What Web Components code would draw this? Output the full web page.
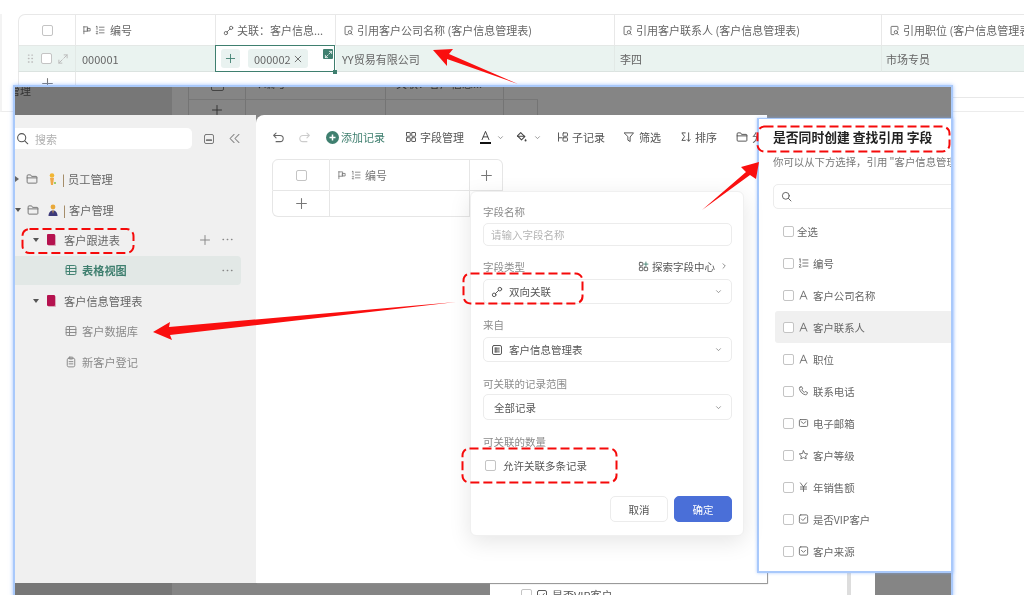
<!DOCTYPE html>
<html lang="zh">
<head>
<meta charset="utf-8">
<title>字段设置</title>
<style>
  html, body { margin: 0; padding: 0; background: #fff; }
  body { width: 1024px; height: 595px; overflow: hidden; font-family: "Noto Sans CJK SC", "Liberation Sans", sans-serif; font-size: 11px; color: #666; }
</style>
</head>
<body>
<collage-page></collage-page>

<script>
const ICONS = {
  check: '<rect x="2" y="2" width="12" height="12" rx="2"/><path d="M5 8l2.2 2.2L11 6"/>',
  drop: '<rect x="2" y="2" width="12" height="12" rx="2"/><path d="M5 7l3 3 3-3"/>',
  flag: '<path d="M3 14V2.5M3 3h6v7H3"/><rect x="9" y="5.5" width="4" height="4"/>',
  num: '<path d="M2 2.5l1.2-.8V7M1.8 10.5c.3-1 2.4-1 2.4.3 0 1-2.4 2-2.4 3.2h2.6M7 3.5h7.5M7 8h7.5M7 12.5h7.5"/>',
  link: '<circle cx="4.2" cy="11.8" r="2.4"/><circle cx="11.8" cy="4.2" r="2.4"/><path d="M5.8 10.2l4.4-4.4"/>',
  lookup: '<path d="M7 14H4a1 1 0 0 1-1-1V3a1 1 0 0 1 1-1h8a1 1 0 0 1 1 1v4"/><circle cx="10" cy="10.5" r="2.4"/><path d="M11.8 12.3l2 2"/>',
  plus: '<path d="M8 2v12M2 8h12"/>',
  dots: '<path d="M2.5 8h.6M7.7 8h.6M12.9 8h.6" stroke-width="1.6"/>',
  chev: '<path d="M4.5 6.5L8 10l3.5-3.5"/>',
  right: '<path d="M6 3.5L10.5 8 6 12.5"/>',
  search: '<circle cx="7" cy="7" r="5"/><path d="M10.8 10.8l3.7 3.7"/>',
  folder: '<path d="M1.5 3.5a1 1 0 0 1 1-1h3.7l1.2 2h6.1a1 1 0 0 1 1 1v7a1 1 0 0 1-1 1h-11a1 1 0 0 1-1-1zM1.5 6.5h13"/>',
  table: '<rect x="1.5" y="2" width="13" height="12" rx="1.5"/><path d="M1.5 6h13M1.5 10h13M6 2v12"/>',
  form: '<rect x="3" y="3" width="10" height="11.5" rx="2"/><rect x="5.5" y="1.5" width="5" height="2.5" rx=".8"/><path d="M5.5 7.5h5M5.5 10.5h5"/>',
  panel: '<rect x="2" y="2" width="12" height="12" rx="2"/><path d="M5 9.5h6" stroke-width="2.4"/>',
  fold: '<path d="M7.5 3L2.5 8l5 5M13.5 3l-5 5 5 5"/>',
  undo: '<path d="M5 2.5L2 5.5l3 3M2.5 5.5H10a3.8 3.8 0 0 1 0 7.6H5"/>',
  redo: '<path d="M11 2.5l3 3-3 3M13.5 5.5H6a3.8 3.8 0 0 0 0 7.6h5"/>',
  fields: '<rect x="2" y="2" width="5" height="5" rx=".6"/><rect x="9" y="2" width="5" height="5" rx=".6"/><rect x="2" y="9" width="5" height="5" rx=".6"/><rect x="9" y="9" width="5" height="5" rx=".6"/>',
  letter: '<path d="M3 14L8 2l5 12M4.8 10h6.4"/>',
  bucket: '<path d="M7 2l5 5-4 4-5-5z"/><path d="M3 6.5h9" /><path d="M13 9.5c.9 1.2 1.2 1.7 1.2 2.3a1.2 1.2 0 0 1-2.4 0c0-.6.3-1.1 1.2-2.3z" fill="currentColor" stroke="none"/>',
  child: '<path d="M2 2.5V9h5M2 9v4.5"/><rect x="8" y="2.5" width="6" height="4.5" rx=".8"/><rect x="8" y="9" width="6" height="4.5" rx=".8"/>',
  filter: '<path d="M2 2.5h12L9.5 8v6l-3-1.8V8z"/>',
  sort: '<path d="M7 2.5H2.5L6 7.5l-3.5 5H7M11.5 2.5v11M9.5 11.5l2 2 2-2"/>',
  phone: '<path d="M3 2.5l2.3-.8 1.5 3.2-1.3 1.3c.7 1.7 2.1 3.1 3.8 3.8l1.3-1.3 3.2 1.5-.8 2.3c-.3.8-1 1.1-1.8 1C6.7 13 3 9.3 2 4.3c-.1-.8.2-1.5 1-1.8z"/>',
  mail: '<rect x="2" y="3" width="12" height="10" rx="1.5"/><path d="M4.5 6L8 8.8 11.5 6"/>',
  star: '<path d="M8 1.8l1.9 4 4.3.6-3.1 3 .8 4.3L8 11.6l-3.9 2.1.8-4.3-3.1-3 4.3-.6z"/>',
  yen: '<path d="M3.5 2L8 8l4.5-6M3.5 8h9M3.5 11h9M8 8v6.5"/>',
  spark: '<rect x="2" y="2" width="5" height="5" rx="1"/><rect x="2" y="9" width="5" height="5" rx="1"/><rect x="9" y="9" width="5" height="5" rx="1"/><path d="M11.5 1.5v6M8.5 4.5h6" stroke="#3f7f6f"/>',
  sheet: '<rect x="2" y="2" width="12" height="12" rx="2"/><path d="M5 5.5h6M5 8h6M5 10.5h6M6.5 5v6"/>',
  expand: '<path d="M9.5 2.5h4v4M13.5 2.5L9 7M6.5 13.5h-4v-4M2.5 13.5L7 9"/>',
  close: '<path d="M3.5 3.5l9 9M12.5 3.5l-9 9"/>',
  grip: '<path d="M5 3h.8M10 3h.8M5 8h.8M10 8h.8M5 13h.8M10 13h.8" stroke-width="2"/>'
};

function svgIcon(name, size) {
  return `<svg xmlns="http://www.w3.org/2000/svg" width="${size}" height="${size}" viewBox="0 0 16 16" fill="none" stroke="currentColor" stroke-width="1.3" stroke-linecap="round" stroke-linejoin="round">${ICONS[name]}</svg>`;
}

class UiIcon extends HTMLElement {
  constructor() {
    super();
    this.attachShadow({ mode: "open" });
  }
  connectedCallback() {
    const size = this.getAttribute("size") || 11;
    this.shadowRoot.innerHTML = `
      <style>:host { display: inline-flex; flex: none; align-items: center; justify-content: center; } svg { display: block; }</style>
      ${svgIcon(this.getAttribute("name"), size)}`;
  }
}

class UiCheck extends HTMLElement {
  constructor() {
    super();
    this.attachShadow({ mode: "open" });
    this.shadowRoot.innerHTML = `
      <style>:host { display: block; flex: none; width: 11px; height: 11px; box-sizing: border-box; border: 1px solid #c4c4c4; border-radius: 2px; background: #fff; }</style>`;
  }
}

class HeadCell extends HTMLElement {
  constructor() {
    super();
    this.attachShadow({ mode: "open" });
    this.shadowRoot.innerHTML = `
      <style>
        :host { display: flex; align-items: center; gap: 3px; padding-left: 7px; box-sizing: border-box; border-right: 1px solid #e8e8e8; white-space: nowrap; overflow: hidden; color: #666; min-width: 0; }
      </style>
      <slot></slot>`;
  }
}

class BaseTable extends HTMLElement {
  constructor() {
    super();
    this.attachShadow({ mode: "open" });
    this.shadowRoot.innerHTML = `
      <style>
        :host { display: block; margin: 14px 0 0 18px; height: 84px; }
        .grid { display: grid; grid-template-columns: 58px 140px 120px 279px 267px 143px; grid-template-rows: 32px 26px 26px; }
        .head { border-top: 1px solid #e8e8e8; border-bottom: 1px solid #e4e8e6; }
        .first { border-left: 1px solid #e8e8e8; border-top-left-radius: 7px; justify-content: center; padding: 0; }
        .row { display: flex; align-items: center; padding-left: 5px; background: #eaf3f0; border-bottom: 1px solid #dbe3e0; border-right: 1px solid #e2e9e6; white-space: nowrap; }
        .tools { padding: 0 0 0 6px; gap: 5px; border-left: 1px solid #e8e8e8; color: #bbb; }
        .active { position: relative; background: #fff; border: 1px solid #3f7f6f; margin: -1px 1px 0 -1px; padding-left: 5px; gap: 8px; z-index: 1; }
        .add { width: 19px; height: 19px; display: flex; align-items: center; justify-content: center; background: #e9f2f0; border-radius: 3px; color: #3f7f6f; }
        .tag { display: flex; align-items: center; height: 19px; padding: 0 5px 0 6px; gap: 2px; background: #e9f2f0; border-radius: 3px; color: #666; }
        .tag ui-icon { color: #555; }
        .grow { position: absolute; right: 1px; top: 3px; width: 10px; height: 10px; background: #3f7f6f; color: #fff; border-radius: 1px; display: flex; align-items: center; justify-content: center; }
        .knob { position: absolute; right: -3px; bottom: -3px; width: 4px; height: 4px; background: #3f7f6f; }
        .add-row { display: flex; justify-content: center; color: #777; border-left: 1px solid #e8e8e8; border-right: 1px solid #e8e8e8; padding-top: 5px; box-sizing: border-box; }
        .add-row ui-icon { align-self: flex-start; }
        .tail { grid-column: 2 / -1; border-bottom: 1px solid #e8e8e8; }
      </style>
      <div class="grid">
        <head-cell class="head first"><ui-check></ui-check></head-cell>
        <head-cell class="head" style="padding-left:6px"><ui-icon name="flag" size="10"></ui-icon><ui-icon name="num" size="10"></ui-icon><span style="margin-left:2px">编号</span></head-cell>
        <head-cell class="head"><ui-icon name="link"></ui-icon><span>关联：客户信息...</span></head-cell>
        <head-cell class="head"><ui-icon name="lookup"></ui-icon><span>引用客户公司名称 (客户信息管理表)</span></head-cell>
        <head-cell class="head"><ui-icon name="lookup"></ui-icon><span>引用客户联系人 (客户信息管理表)</span></head-cell>
        <head-cell class="head"><ui-icon name="lookup"></ui-icon><span>引用职位 (客户信息管理表)</span></head-cell>

        <div class="row tools"><ui-icon name="grip" size="11"></ui-icon><ui-check></ui-check><ui-icon name="expand" size="12"></ui-icon></div>
        <div class="row" style="padding-left:6px">000001</div>
        <div class="row active">
          <div class="add"><ui-icon name="plus" size="11"></ui-icon></div>
          <div class="tag">000002<ui-icon name="close" size="10"></ui-icon></div>
          <div class="grow"><ui-icon name="expand" size="9"></ui-icon></div>
          <div class="knob"></div>
        </div>
        <div class="row" style="padding-left:6px">YY贸易有限公司</div>
        <div class="row">李四</div>
        <div class="row" style="border-right:0;padding-left:4px">市场专员</div>

        <div class="add-row"><ui-icon name="plus" size="13"></ui-icon></div>
        <div class="tail"></div>
      </div>`;
  }
}

class DimStrip extends HTMLElement {
  constructor() {
    super();
    this.attachShadow({ mode: "open" });
    this.shadowRoot.innerHTML = `
      <style>
        :host { display: grid; height: 28px; overflow: hidden; background: #858585; color: #333; grid-template-columns: 157px 17px 57px 140px 118px 34px 1fr; grid-template-rows: 13px 15px; font-size: 11px; }
        div { border-right: 1px solid #747474; border-bottom: 1px solid #777; overflow: hidden; white-space: nowrap; display: flex; align-items: center; justify-content: center; line-height: 14px; }
        .side { grid-row: 1 / 3; background: #777; border: 0; justify-content: flex-start; align-items: flex-start; }
        .side span { margin: -4px 0 0 -6px; }
        .gap { grid-row: 1 / 3; border-bottom: 0; border-right: 1px solid #747474; }
        .cut { align-items: flex-start; justify-content: flex-start; padding-left: 10px; }
        .cut span { margin-top: -11px; }
        .mid { justify-content: center; }
        .end { border: 0; }
        .box { width: 11px; height: 11px; margin-top: -9px; border: 1px solid #444; border-radius: 2px; flex: none; }
      </style>
      <div class="side"><span>管理</span></div>
      <div class="gap"></div>
      <div class="mid" style="align-items:flex-start"><span class="box"></span></div>
      <div class="cut"><span>&nbsp;⁝ 编号</span></div>
      <div class="cut"><span>关联：客户信息...</span></div>
      <div class="cut" style="padding-left:14px;border-right:0"><span>+</span></div>
      <div class="end"></div>
      <div class="mid" style="grid-row:2;grid-column:3;border-bottom:0;color:#333;align-items:flex-end"><ui-icon name="plus" size="12" style="margin-bottom:-1px"></ui-icon></div>
      <div style="grid-row:2;grid-column:4;border-bottom:0"></div>
      <div style="grid-row:2;grid-column:5;border-bottom:0"></div>
      <div style="grid-row:2;grid-column:6;border-bottom:0"></div>`;
  }
}

class TreeRow extends HTMLElement {
  constructor() {
    super();
    this.attachShadow({ mode: "open" });
    this.shadowRoot.innerHTML = `
      <style>
        :host { display: flex; align-items: center; height: 30.4px; white-space: nowrap; color: #666; font-size: 11.2px; flex: none; }
      </style>
      <slot></slot>`;
  }
}

class SideBar extends HTMLElement {
  constructor() {
    super();
    this.attachShadow({ mode: "open" });
    this.shadowRoot.innerHTML = `
      <style>
        :host { display: flex; flex-direction: column; background: #f0f0f0; padding-top: 13px; box-sizing: border-box; overflow: hidden; }
        .top { display: flex; align-items: center; height: 21px; margin-bottom: 15px; }
        .find { display: flex; align-items: center; gap: 6px; width: 177px; height: 21px; background: #fff; border-radius: 0 5px 5px 0; padding-left: 1px; box-sizing: border-box; color: #555; }
        .find span { color: #b0b0b0; }
        .top .panel { margin-left: 11px; color: #777; }
        .top .fold { margin-left: 13px; color: #888; }
        .tri { width: 0; height: 0; border: 3px solid transparent; flex: none; }
        .open { border-top: 4.5px solid #555; border-bottom: 0; }
        .shut { border-left: 4.5px solid #666; border-right: 0; }
        .bar { color: #8a6a3a; margin: 0 3px 0 5px; }
        .bk { width: 8px; height: 11px; background: #b5124f; border-radius: 1px; box-shadow: 1px 1px 0 #d9a9b9; flex: none; margin: 0 9px 0 8px; }
        .sel { background: #e2e8e6; border-radius: 0 4px 4px 0; width: 226px; height: 29px; margin: 0.7px 0; color: #3f7f6f; font-weight: 700; }
        .sub { color: #8a8a8a; }
        .sub ui-icon, .sel ui-icon.view { margin: 0 5px 0 50px; }
        .acts { margin-left: auto; display: flex; align-items: center; gap: 7px; color: #888; margin-right: 7px; font-weight: 400; }
        .per { flex: none; margin-left: 8px; }
      </style>
      <div class="top">
        <div class="find"><ui-icon name="search" size="13"></ui-icon><span>搜索</span></div>
        <ui-icon class="panel" name="panel" size="12"></ui-icon>
        <ui-icon class="fold" name="fold" size="13"></ui-icon>
      </div>
      <tree-row>
        <span class="tri shut"></span>
        <ui-icon name="folder" size="12" style="margin-left:7px;color:#777"></ui-icon>
        <svg class="per" style="margin-left:9px" width="10" height="12" viewBox="0 0 10 12"><circle cx="5" cy="2.5" r="2.3" fill="#f2b632"/><path d="M3 5h4l-1 7H4z" fill="#f0a84a"/><path d="M7 9h2v2H7z" fill="#9ccf6a"/></svg>
        <span class="bar">|</span>员工管理
      </tree-row>
      <tree-row>
        <span class="tri open"></span>
        <ui-icon name="folder" size="12" style="margin-left:6px;color:#777"></ui-icon>
        <svg class="per" style="margin-left:9px" width="10" height="12" viewBox="0 0 10 12"><circle cx="5" cy="3" r="2.4" fill="#e9a93a"/><path d="M.5 12c0-3.5 2-5.5 4.5-5.5S9.5 8.5 9.5 12z" fill="#3d3a7a"/><path d="M4.3 6.5h1.4L5 10z" fill="#e9a93a"/></svg>
        <span class="bar">|</span>客户管理
      </tree-row>
      <tree-row style="padding-left:18px">
        <span class="tri open"></span><span class="bk"></span>客户跟进表
        <span class="acts" style="margin-right:22px;gap:10px"><ui-icon name="plus" size="12"></ui-icon><ui-icon name="dots" size="13"></ui-icon></span>
      </tree-row>
      <tree-row class="sel">
        <ui-icon class="view" name="table" size="12"></ui-icon>表格视图
        <span class="acts"><ui-icon name="dots" size="13"></ui-icon></span>
      </tree-row>
      <tree-row style="padding-left:18px">
        <span class="tri open"></span><span class="bk"></span>客户信息管理表
      </tree-row>
      <tree-row class="sub"><ui-icon name="table" size="12"></ui-icon>客户数据库</tree-row>
      <tree-row class="sub"><ui-icon name="form" size="12"></ui-icon>新客户登记</tree-row>`;
  }
}

class ToolItem extends HTMLElement {
  constructor() {
    super();
    this.attachShadow({ mode: "open" });
    this.shadowRoot.innerHTML = `
      <style>:host { display: inline-flex; flex: none; align-items: center; gap: 3px; color: #555; white-space: nowrap; font-size: 11px; }</style>
      <slot></slot>`;
  }
}

class FormSelect extends HTMLElement {
  constructor() {
    super();
    this.attachShadow({ mode: "open" });
    this.shadowRoot.innerHTML = `
      <style>
        :host { display: flex; align-items: center; gap: 7px; box-sizing: border-box; height: var(--h, 25px); border: 1px solid #ececec; border-radius: 5px; padding: 0 8px 0 var(--p, 7px); color: #555; font-size: 10.5px; background: #fff; }
        .chev { margin-left: auto; color: #777; }
      </style>
      <slot></slot>
      <ui-icon class="chev" name="chev" size="9"></ui-icon>`;
  }
}

class FieldPopover extends HTMLElement {
  constructor() {
    super();
    this.attachShadow({ mode: "open" });
    this.shadowRoot.innerHTML = `
      <style>
        :host { position: absolute; left: 214px; top: 76px; width: 274px; box-sizing: border-box; padding: 12px 11px 13px 12px; background: #fff; border: 1px solid #f0f0f0; border-radius: 6px; box-shadow: 0 6px 22px rgba(0,0,0,.10); font-size: 10.5px; display: flex; flex-direction: column; z-index: 2; }
        label { display: flex; justify-content: space-between; align-items: center; height: 14px; color: #8c8c8c; margin-bottom: 4px; }
        .input { height: 23px; box-sizing: border-box; display: flex; align-items: center; border: 1px solid #ececec; border-radius: 5px; padding-left: 7px; color: #b5b5b5; }
        .more { display: flex; align-items: center; gap: 3px; color: #555; margin-right: 4px; }
        .more ui-icon:last-child { margin-left: 2px; }
        .gap { margin-top: 14px; }
        .many { display: flex; align-items: center; gap: 7px; height: 20px; margin: 3px 0 0 2px; color: #555; }
        .btns { display: flex; justify-content: flex-end; gap: 6px; margin-top: 21px; }
        .btn { width: 58px; height: 26px; box-sizing: border-box; display: flex; align-items: center; justify-content: center; border: 1px solid #ececec; border-radius: 5px; color: #555; }
        .ok { background: #4a6fd8; border-color: #4a6fd8; color: #fff; }
      </style>
      <label style="margin-bottom:5px">字段名称</label>
      <div class="input">请输入字段名称</div>
      <label class="gap" style="margin-top:13px;margin-bottom:6px">字段类型<span class="more"><ui-icon name="spark" size="11"></ui-icon>探索字段中心<ui-icon name="right" size="8"></ui-icon></span></label>
      <form-select><ui-icon name="link" size="12" style="margin-right:-1px"></ui-icon>双向关联</form-select>
      <label class="gap" style="margin-top:13px;margin-bottom:6px">来自</label>
      <form-select><ui-icon name="sheet" size="12" style="margin-right:-1px"></ui-icon>客户信息管理表</form-select>
      <label class="gap">可关联的记录范围</label>
      <form-select style="--h:26px;--p:10px">全部记录</form-select>
      <label class="gap">可关联的数量</label>
      <div class="many"><ui-check></ui-check>允许关联多条记录</div>
      <div class="btns"><div class="btn">取消</div><div class="btn ok">确定</div></div>`;
  }
}

class EditorPane extends HTMLElement {
  constructor() {
    super();
    this.attachShadow({ mode: "open" });
    this.shadowRoot.innerHTML = `
      <style>
        :host { display: block; position: relative; background: #fff; border-top-left-radius: 8px; box-shadow: 1px 1px 1px #8f8f8f; }
        .bar { display: flex; align-items: center; height: 44px; padding-left: 16px; overflow: hidden; }
        .grid { display: grid; grid-template-columns: 58px 140px 33px; grid-template-rows: 32px 26px; margin-left: 16px; width: 231px; color: #777; }
        .grid > div { display: flex; align-items: center; box-sizing: border-box; border-right: 1px solid #e6e6e6; border-bottom: 1px solid #e6e6e6; }
        .c { justify-content: center; border-left: 1px solid #e6e6e6; }
        .t { border-top: 1px solid #e6e6e6; }
        .tl { border-top-left-radius: 6px; }
        .tr { border-top-right-radius: 6px; border-left: 0 !important; }
        .bl { border-bottom-left-radius: 6px; }
        .name { padding-left: 7px; gap: 4px; font-size: 11px; }
      </style>
      <div class="bar">
        <ui-icon name="undo" size="13"></ui-icon>
        <ui-icon name="redo" size="13" style="margin-left:13px;color:#ccc"></ui-icon>
        <tool-item style="margin-left:15px;color:#3f7f6f;gap:2px">
          <svg width="13" height="13" viewBox="0 0 13 13"><circle cx="6.5" cy="6.5" r="6.5" fill="#3f7f6f"/><path d="M6.5 3.5v6M3.5 6.5h6" stroke="#fff" stroke-width="1.5"/></svg>添加记录
        </tool-item>
        <tool-item style="margin-left:20px"><ui-icon name="fields" size="12"></ui-icon>字段管理</tool-item>
        <span style="margin-left:16px;display:flex;flex-direction:column;align-items:center;flex:none;color:#333"><ui-icon name="letter" size="11"></ui-icon><span style="width:11px;height:2px;background:#111;margin-top:1px"></span></span>
        <ui-icon name="chev" size="9" style="margin-left:5px;color:#777"></ui-icon>
        <ui-icon name="bucket" size="13" style="margin-left:10px;color:#444"></ui-icon>
        <ui-icon name="chev" size="9" style="margin-left:5px;color:#777"></ui-icon>
        <tool-item style="margin-left:15px"><ui-icon name="child" size="12"></ui-icon>子记录</tool-item>
        <tool-item style="margin-left:18px;gap:4px"><ui-icon name="filter" size="12"></ui-icon>筛选</tool-item>
        <tool-item style="margin-left:19px"><ui-icon name="sort" size="12"></ui-icon>排序</tool-item>
        <tool-item style="margin-left:19px;gap:4px"><ui-icon name="folder" size="12"></ui-icon>分组</tool-item>
      </div>
      <div class="grid">
        <div class="c t tl"><ui-check></ui-check></div>
        <div class="t name"><ui-icon name="flag" size="10"></ui-icon><ui-icon name="num" size="10"></ui-icon>编号</div>
        <div class="c t tr"><ui-icon name="plus" size="13"></ui-icon></div>
        <div class="c bl"><ui-icon name="plus" size="13"></ui-icon></div>
        <div></div>
      </div>
      <field-popover></field-popover>`;
  }
}

class BottomPeek extends HTMLElement {
  constructor() {
    super();
    this.attachShadow({ mode: "open" });
    this.shadowRoot.innerHTML = `
      <style>
        :host { grid-column: 1 / -1; display: grid; grid-template-columns: 157px 318px 277px 1fr; overflow: hidden; }
        .a { background: #777; }
        .b { background: #858585; }
        .c { background: #fff; display: flex; align-items: center; gap: 4px; padding: 3px 0 0 31px; color: #555; height: 12px; box-sizing: border-box; white-space: nowrap; }
        .c > * { margin-bottom: -8px; }
        .d { background: linear-gradient(90deg, #fff 80px, #ddd 80px 84px, #fff 84px 108px, #858585 108px); }
      </style>
      <div class="a"></div><div class="b"></div>
      <div class="c"><ui-check></ui-check><ui-icon name="check" size="12"></ui-icon><span>是否VIP客户</span></div>
      <div class="d"></div>`;
  }
}

class DimWindow extends HTMLElement {
  constructor() {
    super();
    this.attachShadow({ mode: "open" });
    this.shadowRoot.innerHTML = `
      <style>
        :host { position: absolute; left: 13px; top: 85px; width: 940px; height: 512px; box-sizing: border-box; border: 2px solid #a9c9fb; box-shadow: 0 0 4px rgba(120,170,255,.7); background: #858585; display: grid; grid-template-columns: 241px 511px 184px; grid-template-rows: 28px 468px 12px; }
        dim-strip { grid-column: 1 / -1; }
        .spare { display: flex; align-items: flex-end; }
        .spare div { width: 100%; height: 10px; background: linear-gradient(90deg, #fff 80px, #ddd 80px 84px, #fff 84px 108px, #858585 108px); }
      </style>
      <dim-strip></dim-strip>
      <side-bar></side-bar>
      <editor-pane></editor-pane>
      <div class="spare"><div></div></div>
      <bottom-peek></bottom-peek>`;
  }
}

class FieldOption extends HTMLElement {
  constructor() {
    super();
    this.attachShadow({ mode: "open" });
  }
  connectedCallback() {
    const name = this.getAttribute("icon");
    this.shadowRoot.innerHTML = `
      <style>
        :host { display: flex; align-items: center; height: 32px; padding-left: 8px; gap: ${name ? 4 : 3}px; color: #666; font-size: 10.4px; white-space: nowrap; border-radius: 3px 0 0 3px; }
        :host([hover]) { background: #f0f0f0; }
        ui-icon { width: 11px; }
      </style>
      <ui-check></ui-check>
      ${name ? `<ui-icon name="${name}" size="12"></ui-icon>` : ""}
      <slot></slot>`;
  }
}

class LookupPanel extends HTMLElement {
  constructor() {
    super();
    this.attachShadow({ mode: "open" });
    this.shadowRoot.innerHTML = `
      <style>
        :host { position: absolute; left: 757px; top: 118px; width: 196px; height: 455px; box-sizing: border-box; border: 2px solid #a9c9fb; border-top-width: 1px; background: #fff; box-shadow: 0 0 3px rgba(120,170,255,.6); overflow: hidden; padding: 9px 0 0 14px; }
        h2 { margin: 0; font-size: 12.8px; line-height: 18px; color: #222; font-weight: 700; white-space: nowrap; }
        p { margin: 8px 0 14px; font-size: 10.4px; line-height: 16px; color: #777; white-space: nowrap; }
        .find { display: flex; align-items: center; width: 220px; height: 25px; box-sizing: border-box; border: 1px solid #ececec; border-radius: 5px; padding-left: 7px; color: #555; margin-bottom: 6px; }
        .list { margin-left: 2px; }
      </style>
      <h2>是否同时创建 查找引用 字段</h2>
      <p>你可以从下方选择，引用 "客户信息管理表" 中的字段</p>
      <div class="find"><ui-icon name="search" size="11"></ui-icon></div>
      <div class="list">
        <field-option>全选</field-option>
        <field-option icon="num">编号</field-option>
        <field-option icon="letter">客户公司名称</field-option>
        <field-option icon="letter" hover>客户联系人</field-option>
        <field-option icon="letter">职位</field-option>
        <field-option icon="phone">联系电话</field-option>
        <field-option icon="mail">电子邮箱</field-option>
        <field-option icon="star">客户等级</field-option>
        <field-option icon="yen">年销售额</field-option>
        <field-option icon="check">是否VIP客户</field-option>
        <field-option icon="drop">客户来源</field-option>
      </div>`;
  }
}

// red notes drawn on top of the collage
class RedMarks extends HTMLElement {
  constructor() {
    super();
    this.attachShadow({ mode: "open" });
    this.shadowRoot.innerHTML = `
      <style>:host { position: absolute; inset: 0; pointer-events: none; z-index: 5; } svg { display: block; }</style>
      <svg width="1024" height="595" viewBox="0 0 1024 595">
        <g fill="#fa0f0f">
          <polygon points="433,50 453,49 449,54 518,84 447,59 447,66"/>
          <polygon points="759,162 741,167 746,172 702,210 750,175 756,179"/>
          <polygon points="153,332 170,322 169,327 456,302 170,335 172,340"/>
        </g>
        <g fill="none" stroke="#f50a0a" stroke-width="2" stroke-dasharray="9 4">
          <rect x="22.5" y="229" width="111" height="24" rx="7"/>
          <rect x="463.5" y="273.5" width="119" height="30" rx="7"/>
          <rect x="462.5" y="448.5" width="154" height="34" rx="7"/>
          <rect x="757.5" y="126.5" width="192" height="25" rx="7"/>
        </g>
      </svg>`;
  }
}

class CollagePage extends HTMLElement {
  constructor() {
    super();
    this.attachShadow({ mode: "open" });
    this.shadowRoot.innerHTML = `
      <style>
        :host { display: block; position: relative; width: 1024px; height: 595px; overflow: hidden; background: #fff; filter: blur(.3px); }
        .edge { height: 98px; box-sizing: border-box; border-left: 2px solid #f3f3f3; border-bottom: 1px solid #ececec; }
        base-table { margin-left: 16px; }
      </style>
      <div class="edge"><base-table></base-table></div>
      <dim-window></dim-window>
      <lookup-panel></lookup-panel>
      <red-marks></red-marks>`;
  }
}

customElements.define("ui-icon", UiIcon);
customElements.define("ui-check", UiCheck);
customElements.define("head-cell", HeadCell);
customElements.define("base-table", BaseTable);
customElements.define("dim-strip", DimStrip);
customElements.define("tree-row", TreeRow);
customElements.define("side-bar", SideBar);
customElements.define("tool-item", ToolItem);
customElements.define("form-select", FormSelect);
customElements.define("field-popover", FieldPopover);
customElements.define("editor-pane", EditorPane);
customElements.define("bottom-peek", BottomPeek);
customElements.define("dim-window", DimWindow);
customElements.define("field-option", FieldOption);
customElements.define("lookup-panel", LookupPanel);
customElements.define("red-marks", RedMarks);
customElements.define("collage-page", CollagePage);
</script>
</body>
</html>
